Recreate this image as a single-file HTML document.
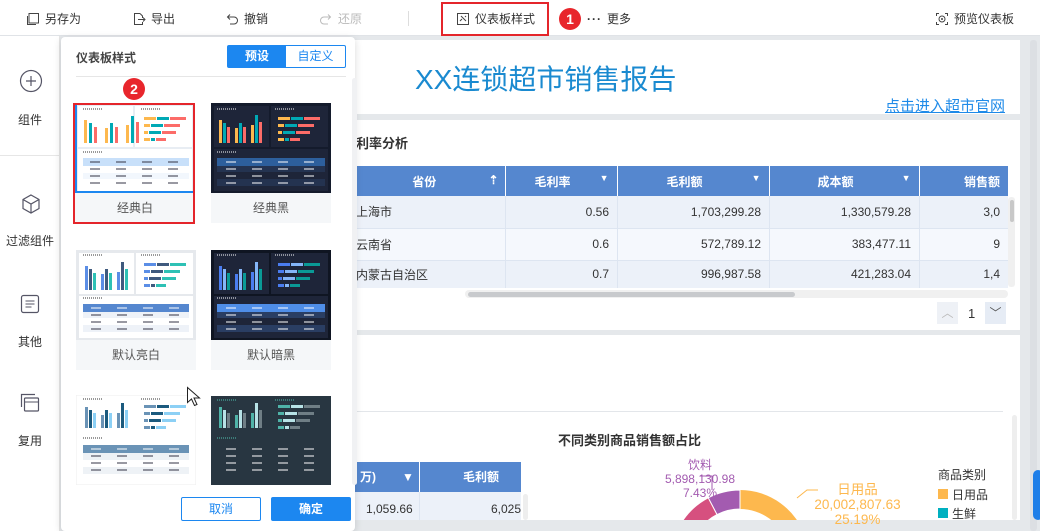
<!DOCTYPE html>
<html><head><meta charset="utf-8"><style>
*{box-sizing:border-box;margin:0;padding:0}
html,body{overflow:hidden}
body{width:1040px;height:531px;position:relative;font-family:"Liberation Sans","Noto Sans CJK SC",sans-serif;font-size:12px;color:#333;background:#e5e8eb}
.abs{position:absolute}
.tb{left:0;top:0;width:1040px;height:36px;background:#fff;border-bottom:1px solid #e0e3e7}
.tbi{position:absolute;top:10px;font-size:12px;color:#333;display:flex;align-items:center;gap:5px}
.side{left:0;top:36px;width:60px;height:495px;background:#fff;border-right:1px solid #e6e6e6}
.si{position:absolute;width:60px;text-align:center;font-size:12px;color:#333}
.w{background:#fff}
table{border-collapse:collapse}
.num{text-align:right;padding-right:8px}
.panel{left:61px;top:37px;width:294px;height:494px;background:#fff;border-radius:4px;box-shadow:0 2px 8px rgba(0,0,0,.15)}
.card{position:absolute;width:120px}
.card svg{display:block}
.card .lb{height:30px;line-height:30px;text-align:center;background:#f5f7f9;color:#555;font-size:12px}
</style></head><body>
<!-- canvas widgets -->
<div class="abs w" style="left:340px;top:40px;width:680px;height:74px"></div>
<div class="abs" style="left:415px;top:58px;font-size:28px;color:#1a8ad0;white-space:nowrap">XX连锁超市销售报告</div>
<div class="abs" style="left:885px;top:95px;font-size:15px;color:#1e8ae8;text-decoration:underline;white-space:nowrap">点击进入超市官网</div>
<div class="abs w" style="left:340px;top:120px;width:680px;height:210px"></div>
<div class="abs" style="left:356px;top:133px;font-size:13px;font-weight:bold;color:#333">利率分析</div>
<table class="abs" style="left:340px;top:166px;width:668px;font-size:12px">
<tr style="background:#5587cf;color:#fff;font-weight:bold;height:30px">
<td style="width:165px;text-align:center;border-right:1px solid #fff;padding-left:20px">省份<span style="float:right;margin-right:6px">⇡</span></td>
<td style="width:112px;text-align:center;border-right:1px solid #fff">毛利率 <span style="float:right;margin-right:8px;font-size:9px">▼</span></td>
<td style="width:152px;text-align:center;border-right:1px solid #fff">毛利额 <span style="float:right;margin-right:8px;font-size:9px">▼</span></td>
<td style="width:150px;text-align:center;border-right:1px solid #fff">成本额 <span style="float:right;margin-right:8px;font-size:9px">▼</span></td>
<td style="text-align:right;padding-right:8px">销售额</td></tr>
<tr style="background:#ecf1f9;height:32px;border-bottom:1px solid #dde5f1"><td style="padding-left:16px">上海市</td><td class="num">0.56</td><td class="num">1,703,299.28</td><td class="num">1,330,579.28</td><td class="num">3,0</td></tr>
<tr style="background:#f5f8fd;height:32px;border-bottom:1px solid #dde5f1"><td style="padding-left:16px">云南省</td><td class="num">0.6</td><td class="num">572,789.12</td><td class="num">383,477.11</td><td class="num">9</td></tr>
<tr style="background:#ecf1f9;height:28px"><td style="padding-left:16px">内蒙古自治区</td><td class="num">0.7</td><td class="num">996,987.58</td><td class="num">421,283.04</td><td class="num">1,4</td></tr>
</table>
<div class="abs" style="left:505px;top:196px;width:1px;height:92px;background:#dde5f1"></div>
<div class="abs" style="left:617px;top:196px;width:1px;height:92px;background:#dde5f1"></div>
<div class="abs" style="left:769px;top:196px;width:1px;height:92px;background:#dde5f1"></div>
<div class="abs" style="left:919px;top:196px;width:1px;height:92px;background:#dde5f1"></div>
<div class="abs" style="left:1008px;top:197px;width:7px;height:90px;background:#f0f0f0;border-radius:3px"></div>
<div class="abs" style="left:1010px;top:200px;width:4px;height:22px;background:#c8c8c8;border-radius:2px"></div>
<div class="abs" style="left:465px;top:290px;width:543px;height:8px;background:#f0f0f0;border-radius:4px"></div>
<div class="abs" style="left:468px;top:292px;width:327px;height:5px;background:#c8cacd;border-radius:3px"></div>
<div class="abs" style="left:937px;top:302px;width:21px;height:22px;background:#eef1f6;color:#bbb;text-align:center;line-height:22px">︿</div>
<div class="abs" style="left:968px;top:306px;font-size:13px">1</div>
<div class="abs" style="left:985px;top:302px;width:21px;height:22px;background:#e6ecf5;color:#555;text-align:center;line-height:22px">﹀</div>
<div class="abs w" style="left:340px;top:335px;width:680px;height:185px"></div>
<div class="abs" style="left:340px;top:411px;width:663px;height:1px;background:#e3e6ea"></div>
<div class="abs" style="left:558px;top:430px;font-size:13px;font-weight:bold;color:#333">不同类别商品销售额占比</div>
<div class="abs" style="left:340px;top:462px;width:181px;height:30px;background:#5587cf;color:#fff;font-weight:bold;line-height:30px"><span style="position:absolute;left:20px">万)</span><span style="position:absolute;left:62px">▼</span><span style="position:absolute;left:79px;top:0;width:1px;height:30px;background:#fff"></span><span style="position:absolute;left:123px">毛利额</span></div>
<div class="abs" style="left:340px;top:492px;width:181px;height:28px;background:#ecf1f9;line-height:34px"><span style="position:absolute;left:26px">1,059.66</span><span style="position:absolute;right:0">6,025</span><span style="position:absolute;left:79px;top:0;width:1px;height:28px;background:#dde5f1"></span></div>
<div class="abs" style="left:523px;top:494px;width:5px;height:26px;background:#eee;border-radius:3px"></div>
<svg class="abs" style="left:600px;top:440px" width="340" height="80">
<g transform="translate(140,119)">
<path d="M0,-69 A69,69 0 0 1 65.6,-21.3 L47.5,-15.5 A50,50 0 0 0 0,-50 Z" fill="#fdb84e"/>
<path d="M0,-69 A69,69 0 0 0 -31.8,-61.2 L-23,-44.4 A50,50 0 0 1 0,-50 Z" fill="#a35bb0" stroke="#fff" stroke-width="1"/>
<path d="M-31.8,-61.2 A69,69 0 0 0 -69,0 L-50,0 A50,50 0 0 1 -23,-44.4 Z" fill="#d6507f" stroke="#fff" stroke-width="1"/>
</g>
<polyline points="112,50 112,36 100,36" fill="none" stroke="#a35bb0"/>
<polyline points="197,58 207,50 218,50" fill="none" stroke="#fdb84e"/>
</svg>
<div class="abs" style="left:660px;top:458px;font-size:12px;color:#a35bb0;text-align:center;width:80px;line-height:14px">饮料<br>5,898,130.98<br>7.43%</div>
<div class="abs" style="left:795px;top:482px;font-size:13.5px;color:#fdb84e;text-align:center;width:125px;line-height:15px">日用品<br>20,002,807.63<br>25.19%</div>
<div class="abs" style="left:938px;top:466px;font-size:12px">商品类别</div>
<div class="abs" style="left:938px;top:489px;width:10px;height:10px;background:#fdb84e"></div>
<div class="abs" style="left:952px;top:486px;font-size:12px">日用品</div>
<div class="abs" style="left:938px;top:508px;width:10px;height:10px;background:#00b0c0"></div>
<div class="abs" style="left:952px;top:505px;font-size:12px">生鲜</div>
<div class="abs" style="left:1012px;top:415px;width:5px;height:105px;background:#eee;border-radius:3px"></div>
<div class="abs" style="left:1030px;top:40px;width:7px;height:491px;background:#dcdfe3;border-radius:3px"></div>
<div class="abs" style="left:1033px;top:470px;width:10px;height:50px;background:#1e7ee8;border-radius:6px"></div>

<!-- toolbar -->
<div class="abs tb"></div>
<div class="tbi" style="left:26px"><svg width="14" height="14"><rect x="3" y="1.5" width="9.5" height="9.5" fill="none" stroke="#444"/><path d="M1.5 4v8.5H10" fill="none" stroke="#444"/></svg>另存为</div>
<div class="tbi" style="left:132px"><svg width="14" height="14"><path d="M8 1.5H2.5v11h8V10M8 1.5l2.5 2.5V6M6 7.5h7M11 5.5l2 2-2 2" fill="none" stroke="#444"/></svg>导出</div>
<div class="tbi" style="left:225px"><svg width="14" height="14"><path d="M3 5h6a3.5 3.5 0 0 1 0 7H5M5 2.5 2.5 5 5 7.5" fill="none" stroke="#444"/></svg>撤销</div>
<div class="tbi" style="left:319px;color:#bbb"><svg width="14" height="14"><path d="M11 5H5a3.5 3.5 0 0 0 0 7h4M9 2.5 11.5 5 9 7.5" fill="none" stroke="#bbb"/></svg>还原</div>
<div class="abs" style="left:408px;top:11px;width:1px;height:15px;background:#ddd"></div>
<div class="tbi" style="left:456px"><svg width="14" height="14"><rect x="1.5" y="1.5" width="11" height="11" fill="none" stroke="#444"/><path d="M5 4l5 5M4 9l2-2M9 4l1 1" stroke="#444"/></svg>仪表板样式</div>
<div class="abs" style="left:441px;top:2px;width:108px;height:34px;border:2px solid #e4252b"></div>
<div class="abs" style="left:559px;top:8px;width:22px;height:22px;border-radius:50%;background:#e8262c;color:#fff;font-weight:bold;font-size:14px;text-align:center;line-height:22px">1</div>
<div class="tbi" style="left:587px"><b style="letter-spacing:1px">···</b> 更多</div>
<div class="tbi" style="left:935px"><svg width="14" height="14"><path d="M1.5 4V1.5H4M10 1.5h2.5V4M12.5 10v2.5H10M4 12.5H1.5V10" fill="none" stroke="#444"/><circle cx="7" cy="7" r="3" fill="none" stroke="#444"/><circle cx="7" cy="7" r="1" fill="#444"/></svg>预览仪表板</div>

<!-- sidebar -->
<div class="abs side"></div>
<div class="abs" style="left:0;top:155px;width:60px;height:1px;background:#e6e6e6"></div>
<svg class="abs" style="left:19px;top:69px" width="24" height="24"><circle cx="12" cy="12" r="10.5" fill="none" stroke="#556" stroke-width="1.2"/><path d="M12 7v10M7 12h10" stroke="#556" stroke-width="1.2"/></svg>
<div class="si" style="top:111px">组件</div>
<svg class="abs" style="left:20px;top:193px" width="22" height="22"><path d="M11 2 19 6.5v9L11 20 3 15.5v-9Z M3 6.5 11 11l8-4.5M11 11v9" fill="none" stroke="#556" stroke-width="1.2"/></svg>
<div class="si" style="top:232px">过滤组件</div>
<svg class="abs" style="left:20px;top:294px" width="20" height="20"><rect x="1.5" y="1.5" width="17" height="17" rx="2" fill="none" stroke="#556" stroke-width="1.2"/><path d="M5.5 7h9M5.5 10h9M5.5 13h6" stroke="#556"/></svg>
<div class="si" style="top:333px">其他</div>
<svg class="abs" style="left:20px;top:393px" width="20" height="20"><path d="M1.5 14V1.5H15" fill="none" stroke="#556" stroke-width="1.2"/><rect x="4.5" y="5" width="14" height="13" rx="1" fill="none" stroke="#556" stroke-width="1.2"/><path d="M4.5 9h14" stroke="#556"/></svg>
<div class="si" style="top:432px">复用</div>

<!-- panel -->
<div class="abs panel"></div>
<div class="abs" style="left:76px;top:49px;font-size:12px;font-weight:bold;color:#444">仪表板样式</div>
<div class="abs" style="left:227px;top:45px;width:119px;height:23px;border:1px solid #1c87f0;border-radius:2px;display:flex;font-size:12px">
<div style="width:58px;background:#1c87f0;color:#fff;text-align:center;line-height:21px;font-weight:bold">预设</div>
<div style="flex:1;color:#1c87f0;text-align:center;line-height:21px">自定义</div></div>
<div class="abs" style="left:76px;top:76px;width:270px;height:1px;background:#e6e6e6"></div>
<div class="abs" style="left:352px;top:78px;width:5px;height:407px;background:#f0f1f3;border-radius:3px"></div>

<!-- card 1 -->
<div class="card" style="left:75px;top:103px">
<svg width="120" height="90"><rect width="120" height="90" fill="#e8edf3"/><rect x="3" y="3" width="55" height="41" fill="#fff"/><rect x="60" y="3" width="57" height="41" fill="#fff"/><rect x="3" y="46" width="114" height="42" fill="#fff"/>
<path d="M8 6h19M66 6h19M8 49h19" stroke="#333" stroke-dasharray="1 1"/>
<g fill="#fdb84e"><rect x="9" y="17" width="3" height="23"/><rect x="30" y="25" width="3" height="15"/><rect x="51" y="22" width="3" height="18"/></g>
<g fill="#00a9b5"><rect x="14" y="20" width="3" height="20"/><rect x="35" y="20" width="3" height="20"/><rect x="56" y="13" width="3" height="27"/></g>
<g fill="#fc6c68"><rect x="19" y="24" width="3" height="16"/><rect x="40" y="24" width="3" height="16"/><rect x="61" y="19" width="3" height="21"/></g>
<rect x="69" y="14" width="12" height="3" fill="#fdb84e"/><rect x="82" y="14" width="12" height="3" fill="#00a9b5"/><rect x="95" y="14" width="16" height="3" fill="#fc6c68"/><rect x="69" y="21" width="6" height="3" fill="#fdb84e"/><rect x="76" y="21" width="12" height="3" fill="#00a9b5"/><rect x="89" y="21" width="16" height="3" fill="#fc6c68"/><rect x="69" y="28" width="4" height="3" fill="#fdb84e"/><rect x="74" y="28" width="12" height="3" fill="#00a9b5"/><rect x="87" y="28" width="14" height="3" fill="#fc6c68"/><rect x="69" y="35" width="6" height="3" fill="#fdb84e"/><rect x="76" y="35" width="4" height="3" fill="#00a9b5"/><rect x="81" y="35" width="10" height="3" fill="#fc6c68"/>
<rect x="8" y="55" width="106" height="8" fill="#c8e0fa"/><rect x="8" y="70" width="106" height="6" fill="#f2f7fd"/>
<path d="M15 59h10M41 59h10M67 59h10M93 59h10M15 66h10M41 66h10M67 66h10M93 66h10M15 73h10M41 73h10M67 73h10M93 73h10M15 80h10M41 80h10M67 80h10M93 80h10" stroke="#334"/>
<rect x="1" y="1" width="118" height="88" fill="none" stroke="#1c87f0" stroke-width="2"/></svg>
<div class="lb">经典白</div></div>
<div class="abs" style="left:73px;top:103px;width:122px;height:121px;border:2px solid #e4252b"></div>
<div class="abs" style="left:123px;top:78px;width:22px;height:22px;border-radius:50%;background:#e8262c;color:#fff;font-weight:bold;font-size:14px;text-align:center;line-height:22px">2</div>

<!-- card 2 -->
<div class="card" style="left:211px;top:103px">
<svg width="120" height="90"><rect width="120" height="90" fill="#141b2c"/><rect x="3" y="3" width="55" height="41" fill="#1e2539"/><rect x="60" y="3" width="57" height="41" fill="#1e2539"/><rect x="3" y="46" width="114" height="42" fill="#1e2539"/>
<path d="M6 6h19M64 6h19M6 49h19" stroke="#fff" stroke-dasharray="1 1"/>
<g fill="#fdb84e"><rect x="8" y="17" width="3" height="23"/><rect x="24" y="25" width="3" height="15"/><rect x="40" y="22" width="3" height="18"/></g>
<g fill="#00a9b5"><rect x="12" y="20" width="3" height="20"/><rect x="28" y="20" width="3" height="20"/><rect x="44" y="12" width="3" height="28"/></g>
<g fill="#fc6c68"><rect x="16" y="24" width="3" height="16"/><rect x="32" y="24" width="3" height="16"/><rect x="48" y="19" width="3" height="21"/></g>
<rect x="67" y="14" width="12" height="3" fill="#fdb84e"/><rect x="80" y="14" width="12" height="3" fill="#00a9b5"/><rect x="93" y="14" width="16" height="3" fill="#fc6c68"/><rect x="67" y="21" width="6" height="3" fill="#fdb84e"/><rect x="74" y="21" width="12" height="3" fill="#00a9b5"/><rect x="87" y="21" width="16" height="3" fill="#fc6c68"/><rect x="67" y="28" width="4" height="3" fill="#fdb84e"/><rect x="72" y="28" width="12" height="3" fill="#00a9b5"/><rect x="85" y="28" width="14" height="3" fill="#fc6c68"/><rect x="67" y="35" width="6" height="3" fill="#fdb84e"/><rect x="74" y="35" width="4" height="3" fill="#00a9b5"/><rect x="79" y="35" width="10" height="3" fill="#fc6c68"/>
<rect x="6" y="55" width="108" height="8" fill="#2d5f9c"/><rect x="6" y="63" width="108" height="6" fill="#243350"/><rect x="6" y="76" width="108" height="7" fill="#243350"/>
<path d="M15 59h10M41 59h10M67 59h10M93 59h10M15 66h10M41 66h10M67 66h10M93 66h10M15 73h10M41 73h10M67 73h10M93 73h10M15 80h10M41 80h10M67 80h10M93 80h10" stroke="#fff"/></svg>
<div class="lb">经典黑</div></div>

<!-- card 3 -->
<div class="card" style="left:76px;top:250px">
<svg width="120" height="90"><rect width="120" height="90" fill="#e6e9ed"/><rect x="3" y="3" width="55" height="41" fill="#fff"/><rect x="60" y="3" width="57" height="41" fill="#fff"/><rect x="3" y="46" width="114" height="42" fill="#fff"/>
<path d="M7 5h19M65 5h19M7 48h19" stroke="#333" stroke-dasharray="1 1"/>
<g fill="#5b8ee6"><rect x="9" y="16" width="3" height="24"/><rect x="25" y="24" width="3" height="16"/><rect x="41" y="22" width="3" height="18"/></g>
<g fill="#3f5a7e"><rect x="13" y="19" width="3" height="21"/><rect x="29" y="19" width="3" height="21"/><rect x="45" y="12" width="3" height="28"/></g>
<g fill="#2ec1b5"><rect x="17" y="23" width="3" height="17"/><rect x="33" y="23" width="3" height="17"/><rect x="49" y="19" width="3" height="21"/></g>
<rect x="68" y="13" width="12" height="3" fill="#5b8ee6"/><rect x="81" y="13" width="12" height="3" fill="#3f5a7e"/><rect x="94" y="13" width="16" height="3" fill="#2ec1b5"/><rect x="68" y="20" width="6" height="3" fill="#5b8ee6"/><rect x="75" y="20" width="12" height="3" fill="#3f5a7e"/><rect x="88" y="20" width="16" height="3" fill="#2ec1b5"/><rect x="68" y="27" width="4" height="3" fill="#5b8ee6"/><rect x="73" y="27" width="12" height="3" fill="#3f5a7e"/><rect x="86" y="27" width="14" height="3" fill="#2ec1b5"/><rect x="68" y="34" width="6" height="3" fill="#5b8ee6"/><rect x="75" y="34" width="4" height="3" fill="#3f5a7e"/><rect x="80" y="34" width="10" height="3" fill="#2ec1b5"/>
<rect x="7" y="54" width="106" height="8" fill="#5587cf"/><rect x="7" y="62" width="106" height="6" fill="#eef2f8"/><rect x="7" y="75" width="106" height="7" fill="#eef2f8"/>
<path d="M15 58h10M41 58h10M67 58h10M93 58h10" stroke="#fff"/><path d="M15 65h10M41 65h10M67 65h10M93 65h10M15 72h10M41 72h10M67 72h10M93 72h10M15 79h10M41 79h10M67 79h10M93 79h10" stroke="#334"/></svg>
<div class="lb">默认亮白</div></div>

<!-- card 4 -->
<div class="card" style="left:211px;top:250px">
<svg width="120" height="90"><rect width="120" height="90" fill="#0f1522"/><rect x="3" y="3" width="55" height="41" fill="#1e2539"/><rect x="60" y="3" width="57" height="41" fill="#1e2539"/><rect x="3" y="46" width="114" height="42" fill="#1e2539"/>
<path d="M6 5h19M64 5h19M6 48h19" stroke="#fff" stroke-dasharray="1 1"/>
<g fill="#4a7df0"><rect x="8" y="16" width="3" height="24"/><rect x="24" y="24" width="3" height="16"/><rect x="40" y="22" width="3" height="18"/></g>
<g fill="#84b6f8"><rect x="12" y="19" width="3" height="21"/><rect x="28" y="19" width="3" height="21"/><rect x="44" y="12" width="3" height="28"/></g>
<g fill="#0a9a96"><rect x="16" y="23" width="3" height="17"/><rect x="32" y="23" width="3" height="17"/><rect x="48" y="19" width="3" height="21"/></g>
<rect x="67" y="13" width="12" height="3" fill="#4a7df0"/><rect x="80" y="13" width="12" height="3" fill="#84b6f8"/><rect x="93" y="13" width="16" height="3" fill="#0a9a96"/><rect x="67" y="20" width="6" height="3" fill="#4a7df0"/><rect x="74" y="20" width="12" height="3" fill="#84b6f8"/><rect x="87" y="20" width="16" height="3" fill="#0a9a96"/><rect x="67" y="27" width="4" height="3" fill="#4a7df0"/><rect x="72" y="27" width="12" height="3" fill="#84b6f8"/><rect x="85" y="27" width="14" height="3" fill="#0a9a96"/><rect x="67" y="34" width="6" height="3" fill="#4a7df0"/><rect x="74" y="34" width="4" height="3" fill="#84b6f8"/><rect x="79" y="34" width="10" height="3" fill="#0a9a96"/>
<rect x="6" y="54" width="108" height="8" fill="#4f8ee8"/><rect x="6" y="62" width="108" height="6" fill="#2a3e63"/><rect x="6" y="75" width="108" height="7" fill="#2a3e63"/>
<path d="M15 58h10M41 58h10M67 58h10M93 58h10M15 65h10M41 65h10M67 65h10M93 65h10M15 72h10M41 72h10M67 72h10M93 72h10M15 79h10M41 79h10M67 79h10M93 79h10" stroke="#fff"/></svg>
<div class="lb">默认暗黑</div></div>

<!-- card 5 -->
<div class="card" style="left:76px;top:395px">
<svg width="120" height="90"><rect width="120" height="90" fill="#fff" stroke="#eee"/>
<path d="M7 4h19M65 4h19M7 43h19" stroke="#333" stroke-dasharray="1 1"/>
<g fill="#6a93b6"><rect x="9" y="12" width="3" height="21"/><rect x="25" y="20" width="3" height="13"/><rect x="41" y="18" width="3" height="15"/></g>
<g fill="#1b5a7e"><rect x="13" y="15" width="3" height="18"/><rect x="29" y="15" width="3" height="18"/><rect x="45" y="8" width="3" height="25"/></g>
<g fill="#8cd0f5"><rect x="17" y="18" width="3" height="15"/><rect x="33" y="18" width="3" height="15"/><rect x="49" y="15" width="3" height="18"/></g>
<rect x="68" y="10" width="12" height="3" fill="#6a93b6"/><rect x="81" y="10" width="12" height="3" fill="#1b5a7e"/><rect x="94" y="10" width="16" height="3" fill="#8cd0f5"/><rect x="68" y="17" width="6" height="3" fill="#6a93b6"/><rect x="75" y="17" width="12" height="3" fill="#1b5a7e"/><rect x="88" y="17" width="16" height="3" fill="#8cd0f5"/><rect x="68" y="24" width="4" height="3" fill="#6a93b6"/><rect x="73" y="24" width="12" height="3" fill="#1b5a7e"/><rect x="86" y="24" width="14" height="3" fill="#8cd0f5"/><rect x="68" y="31" width="6" height="3" fill="#6a93b6"/><rect x="75" y="31" width="4" height="3" fill="#1b5a7e"/><rect x="80" y="31" width="10" height="3" fill="#8cd0f5"/>
<rect x="7" y="50" width="106" height="8" fill="#6a93b6"/><rect x="7" y="58" width="106" height="7" fill="#eef2f6"/><rect x="7" y="72" width="106" height="7" fill="#eef2f6"/>
<path d="M15 54h10M41 54h10M67 54h10M93 54h10" stroke="#fff"/><path d="M15 61h10M41 61h10M67 61h10M93 61h10M15 68h10M41 68h10M67 68h10M93 68h10M15 75h10M41 75h10M67 75h10M93 75h10" stroke="#334"/></svg></div>

<!-- card 6 -->
<div class="card" style="left:211px;top:396px">
<svg width="120" height="89"><rect width="120" height="89" fill="#283641"/>
<path d="M6 4h19M64 4h19M6 42h19" stroke="#4fc0b0" stroke-dasharray="1 1"/>
<g fill="#4fb3a8"><rect x="8" y="11" width="3" height="21"/><rect x="24" y="19" width="3" height="13"/><rect x="40" y="17" width="3" height="15"/></g>
<g fill="#b7e2e6"><rect x="12" y="14" width="3" height="18"/><rect x="28" y="14" width="3" height="18"/><rect x="44" y="7" width="3" height="25"/></g>
<g fill="#6f7e85"><rect x="16" y="17" width="3" height="15"/><rect x="32" y="17" width="3" height="15"/><rect x="48" y="14" width="3" height="18"/></g>
<rect x="67" y="9" width="12" height="3" fill="#4fb3a8"/><rect x="80" y="9" width="12" height="3" fill="#b7e2e6"/><rect x="93" y="9" width="16" height="3" fill="#6f7e85"/><rect x="67" y="16" width="6" height="3" fill="#4fb3a8"/><rect x="74" y="16" width="12" height="3" fill="#b7e2e6"/><rect x="87" y="16" width="16" height="3" fill="#6f7e85"/><rect x="67" y="23" width="4" height="3" fill="#4fb3a8"/><rect x="72" y="23" width="12" height="3" fill="#b7e2e6"/><rect x="85" y="23" width="14" height="3" fill="#6f7e85"/><rect x="67" y="30" width="6" height="3" fill="#4fb3a8"/><rect x="74" y="30" width="4" height="3" fill="#b7e2e6"/><rect x="79" y="30" width="10" height="3" fill="#6f7e85"/>
<path d="M15 53h10M41 53h10M67 53h10M93 53h10M15 60h10M41 60h10M67 60h10M93 60h10M15 67h10M41 67h10M67 67h10M93 67h10M15 74h10M41 74h10M67 74h10M93 74h10" stroke="#fff"/></svg></div>

<svg class="abs" style="left:186px;top:386px" width="16" height="22"><path d="M1.5 1.5v15l4-3.5 3 6.5 2.5-1-3-6.5h5.5Z" fill="#fff" stroke="#222"/></svg>

<div class="abs" style="left:181px;top:497px;width:80px;height:24px;border:1px solid #1c87f0;border-radius:2px;color:#1c87f0;text-align:center;line-height:22px">取消</div>
<div class="abs" style="left:271px;top:497px;width:80px;height:24px;background:#1c87f0;border-radius:2px;color:#fff;text-align:center;line-height:24px;font-weight:bold">确定</div>
</body></html>
